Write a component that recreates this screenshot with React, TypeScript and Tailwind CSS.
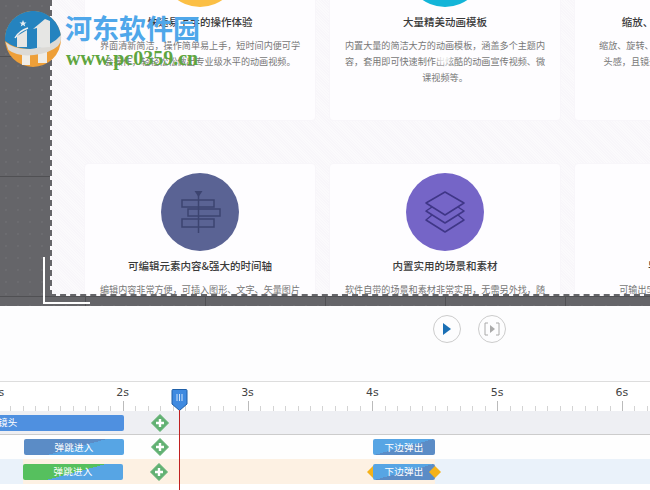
import React from "react";

const cards = [
  [
    { circle: "bg-[#fbbf45]", title: "快速易上手的操作体验", lines: ["界面清新简洁，操作简单易上手，短时间内便可学", "会操作，轻轻松松做出专业级水平的动画视频。"], icon: null },
    { circle: "bg-[#13b5d8]", title: "大量精美动画模板", lines: ["内置大量的简洁大方的动画模板，涵盖多个主题内", "容，套用即可快速制作出炫酷的动画宣传视频、微", "课视频等。"], icon: null },
    { circle: "bg-[#e86a5c]", title: "缩放、旋转、移动的镜头特效", lines: ["缩放、旋转、移动的转场特效，让视频充满镜", "头感，且镜头切换流畅自然，更加生动有趣"], icon: null },
  ],
  [
    { circle: "bg-[#5a6394]", title: "可编辑元素内容&强大的时间轴", lines: ["编辑内容非常方便，可插入图形、文字、矢量图片"], icon: "sign" },
    { circle: "bg-[#7565c7]", title: "内置实用的场景和素材", lines: ["软件自带的场景和素材非常实用，无需另外找，随"], icon: "layers" },
    { circle: "bg-[#e0a24c]", title: "导出多种视频格式", lines: ["可输出5种格式的视频和动图文件等"], icon: null },
  ],
];

const SignIcon = () => (
  <svg width="78" height="78" viewBox="0 0 78 78" fill="none" stroke="#3c4470" strokeWidth="1.5">
    <path d="M37.5 19V60" />
    <path d="M33.5 18H41.5L37.5 24Z" fill="#3c4470" stroke="none" />
    <rect x="21" y="27" width="32" height="7" />
    <rect x="27" y="36" width="32" height="7" />
    <rect x="21" y="46" width="32" height="8" />
  </svg>
);

const LayersIcon = () => (
  <svg width="78" height="78" viewBox="0 0 78 78" fill="none" stroke="#3f3687" strokeWidth="1.5" strokeLinejoin="round">
    <path d="M20 30L39 19L58 30L39 42Z" />
    <path d="M26 34L20 38L39 50L58 38L52 34" />
    <path d="M26 42L20 47L39 59L58 47L52 42" />
  </svg>
);

const AddKey = () => (
  <svg width="18" height="18" viewBox="0 0 18 18" className="shrink-0">
    <path d="M9 .5L17.5 9L9 17.5L.5 9Z" fill="#62b173" stroke="#62b173" strokeLinejoin="round" />
    <path d="M9 5V13M5 9H13" stroke="#fff" strokeWidth="2.4" />
  </svg>
);

const OrangeKey = () => (
  <svg width="12" height="12" viewBox="0 0 12 12" className="shrink-0">
    <path d="M6 0L12 6L6 12L0 6Z" fill="#f5b21a" />
  </svg>
);

const Logo = () => (
  <svg width="58" height="58" viewBox="0 0 58 58">
    <circle cx="29" cy="28" r="28" fill="#ee9f38" />
    <path d="M18 40H26V54H18ZM34 40H43V52H34Z" fill="#efece6" />
    <path d="M1 30A28 28 0 0 1 57 26Q48 36 30 38Q12 39 1 30Z" fill="#2583bf" />
    <path d="M1.5 31Q12 40 30 37.5Q48 35 57 24Q58 30 54 35Q46 42 30 44Q14 46 4.500 39Z" fill="#dcdad6" />
    <path d="M13 25L23 19V36H13Z" fill="#e6e6e4" />
    <path d="M33 37V17L29 18L41 8L46 10V36Z" fill="#e6e6e4" />
    <path d="M11 27Q15 20 24 17" fill="none" stroke="#f0f0f0" strokeWidth="1.500" />
    <path d="M19 9L20 11.500H22.500L20.500 13L21.300 15.500L19 14L16.700 15.500L17.500 13L15.500 11.500H18Z" fill="#e8eef2" />
  </svg>
);

const Bar = ({ label, className }: { label: string; className: string }) => (
  <div className={`flex h-[16px] items-center justify-center rounded-[2px] text-[9.5px] tracking-[0.2px] text-white ${className}`}>
    {label}
  </div>
);

export default function App() {
  const ticks = Array.from({ length: 53 }, (_, i) => i);

  return (
    <div className="relative h-[490px] w-[650px] overflow-hidden bg-white font-[family-name:'Noto_Sans_CJK_SC',sans-serif]">
      {/* Canvas */}
      <div className="h-[306px] bg-[#656569] bg-[linear-gradient(#505053_1px,transparent_1px),linear-gradient(90deg,#505053_1px,transparent_1px),radial-gradient(#747478_0.6px,transparent_0.8px)] bg-[size:120px_120px,120px_120px,12px_12px] bg-[position:85px_56px,85px_56px,0_0]">
        <div className="flex h-[296px] pl-[50px]">
          <div className="min-w-0 flex-1 overflow-hidden border-b-2 border-l-2 border-dashed border-[#66666a] bg-[#faf8fc] bg-[repeating-linear-gradient(45deg,#f8f6fa_0,#f8f6fa_1px,#fbfafc_1px,#fbfafc_2px)]">
            <div className="mt-[-81px] flex flex-col gap-[42px] pl-[32px]">
              {cards.map((row, r) => (
                <div key={r} className="flex gap-[13px]">
                  {row.map((c) => (
                    <div key={c.title} className="flex h-[202px] w-[232px] shrink-0 flex-col items-center rounded-[4px] border border-[#f8f6fa] bg-[#fefdff] pt-[9px]">
                      <div className={`h-[78px] w-[78px] shrink-0 rounded-full ${c.circle}`}>
                        {c.icon === "sign" && <SignIcon />}
                        {c.icon === "layers" && <LayersIcon />}
                      </div>
                      <div className="mt-[7px] text-[10.5px] leading-[16px] font-medium whitespace-nowrap text-[#3a3a3a]">{c.title}</div>
                      <div className="mt-[7px] text-center text-[9.1px] leading-[16px] whitespace-nowrap text-[#777]">
                        {c.lines.map((l) => (
                          <div key={l}>{l}</div>
                        ))}
                      </div>
                    </div>
                  ))}
                </div>
              ))}
            </div>
          </div>
        </div>
      </div>

      {/* Player controls */}
      <div className="flex h-[75px] items-start gap-[17px] bg-[#fdfdfe] pt-[9px] pl-[433px]">
        <button className="flex h-[28px] w-[28px] items-center justify-center rounded-full border border-[#ccc]">
          <svg width="10" height="12" viewBox="0 0 10 12">
            <path d="M1 0L9 6L1 12Z" fill="#1a6fb5" />
          </svg>
        </button>
        <button className="flex h-[28px] w-[28px] items-center justify-center rounded-full border border-[#ccc]">
          <svg width="16" height="14" viewBox="0 0 16 14" fill="none">
            <path d="M4 1H1V13H4M12 1H15V13H12" stroke="#aaa" />
            <path d="M6 3L11 7L6 11Z" fill="#aaa" />
          </svg>
        </button>
      </div>

      {/* Timeline */}
      <div className="border-t border-[#ddd] bg-white">
        <div className="h-[29px] overflow-hidden">
          <div className="ml-[-64.5px] flex h-[18px] items-end font-[family-name:'DejaVu_Sans',sans-serif] text-[11px] leading-[14px] text-[#444]">
            {["1s", "2s", "3s", "4s", "5s", "6s"].map((s) => (
              <div key={s} className="w-[124.8px] shrink-0 text-center">
                {s}
              </div>
            ))}
          </div>
          <svg width="650" height="11" className="block">
            {ticks.map((i) => {
              const x = Math.round(-2 + i * 12.48) + 0.5;
              const major = i % 10 === 0;
              return <path key={i} d={`M${x} ${major ? 1 : 6}V11`} stroke={major ? "#bbb" : "#d4d4d4"} />;
            })}
          </svg>
        </div>

        <div className="flex h-[24px] items-center border-b border-[#ccc] bg-[#eeeff3]">
          <Bar label="镜头" className="ml-[-2px] w-[126px] justify-start bg-[#4f90e0]" />
          <div className="ml-[27px]"><AddKey /></div>
        </div>

        <div className="flex h-[24px] items-center bg-[#fefefe]">
          <Bar label="弹跳进入" className="ml-[24px] w-[100px] bg-[linear-gradient(165deg,#5b8cc6_52%,#57a5e4_52%)]" />
          <div className="ml-[27px]"><AddKey /></div>
          <Bar label="下边弹出" className="ml-[204px] w-[62px] bg-[linear-gradient(165deg,#57a5e4_50%,#5b8cc6_50%)]" />
        </div>

        <div className="flex h-[25px] items-center bg-[linear-gradient(to_right,#eaf2fa_23px,#fdf1e3_23px,#fdf1e3_435px,#eaf2fa_435px)]">
          <Bar label="弹跳进入" className="ml-[23px] w-[100px] bg-[linear-gradient(165deg,#56c05e_52%,#57a5e4_52%)]" />
          <div className="ml-[27px]"><AddKey /></div>
          <div className="ml-[199px]"><OrangeKey /></div>
          <Bar label="下边弹出" className="mx-[-6px] w-[62px] bg-[linear-gradient(165deg,#57a5e4_50%,#5b8cc6_50%)]" />
          <OrangeKey />
        </div>
      </div>

      {/* Overlays */}
      <div className="absolute top-[257px] left-[43px] h-[47px] w-[47px] border-b-2 border-l-2 border-white" />
      <div className="absolute top-[53px] left-[437px] h-[12px] w-[14px] rounded-full bg-white/80 blur-[2px]" />

      <div className="absolute top-[389px] left-[171px] flex flex-col items-center">
        <svg width="17" height="22" viewBox="0 0 17 22" className="block">
          <path d="M1 1.500Q1 .5 2 .5H15Q16 .5 16 1.500V15L8.500 21.500L1 15Z" fill="#3f8ae0" stroke="#1f5fa8" />
          <path d="M6 5V12M8.500 5V12M11 5V12" stroke="#cfe3fa" />
        </svg>
        <div className="mt-[-1px] h-[80px] w-px bg-[#c02020]" />
      </div>

      <div className="absolute top-[11px] left-[4px]"><Logo /></div>
      <div className="absolute top-[9px] left-[65px] text-[27px] leading-[38px] font-bold whitespace-nowrap text-[#4fa7ea]">河东软件园</div>
      <div className="absolute top-[47px] left-[66px] font-[family-name:'Liberation_Serif',serif] text-[20px] leading-[22px] font-bold whitespace-nowrap text-[#5fa53f]">www.pc0359.cn</div>
    </div>
  );
}
